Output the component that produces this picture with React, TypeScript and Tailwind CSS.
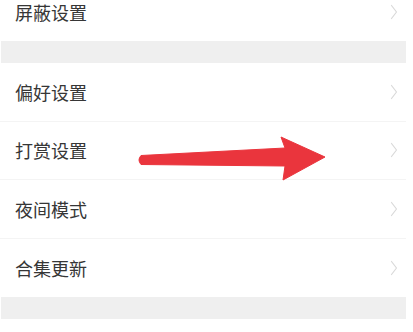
import React from "react";

const groups: string[][] = [["屏蔽设置"], ["偏好设置", "打赏设置", "夜间模式", "合集更新"]];

function Chevron() {
  return (
    <svg width="8" height="16" viewBox="0 0 8 16" fill="none" className="shrink-0">
      <path d="M1.5 1.5 L6.5 8 L1.5 14.5" stroke="#d9d9d9" strokeWidth="1.2" strokeLinecap="round" strokeLinejoin="round" />
    </svg>
  );
}

function Row({ label, last }: { label: string; last: boolean }) {
  return (
    <div
      className={`flex h-[58.5px] items-center justify-between pl-[15px] pr-[8px] ${
        last ? "" : "border-b border-[#f4f4f4]"
      }`}
    >
      <span className="text-[18px] leading-none text-[#363636]">{label}</span>
      <Chevron />
    </div>
  );
}

export default function App() {
  return (
    <div
      className="relative h-[332px] w-[413px] overflow-hidden bg-white"
      style={{ fontFamily: '"Noto Sans CJK SC", "Noto Sans", sans-serif' }}
    >
      <div className="-mt-[17.5px] w-[406px]">
        {groups.map((g, gi) => (
          <div key={gi}>
            <div className="bg-white">
              {g.map((label, i) => (
                <Row key={label} label={label} last={i === g.length - 1} />
              ))}
            </div>
            <div className="ml-px h-[22px] bg-[#efefef]" />
          </div>
        ))}
      </div>

      {/* annotation arrow */}
      <svg
        className="pointer-events-none absolute left-0 top-0"
        width="413"
        height="332"
        viewBox="0 0 413 332"
      >
        <path
          d="M141 155.5 L285 148 L281 137 L325 157 L283 180 L285 166 L141 164.5 Q137 160 141 155.5 Z"
          fill="#ea353d"
          stroke="#ea353d"
          strokeWidth="1"
          strokeLinejoin="round"
        />
      </svg>
    </div>
  );
}
